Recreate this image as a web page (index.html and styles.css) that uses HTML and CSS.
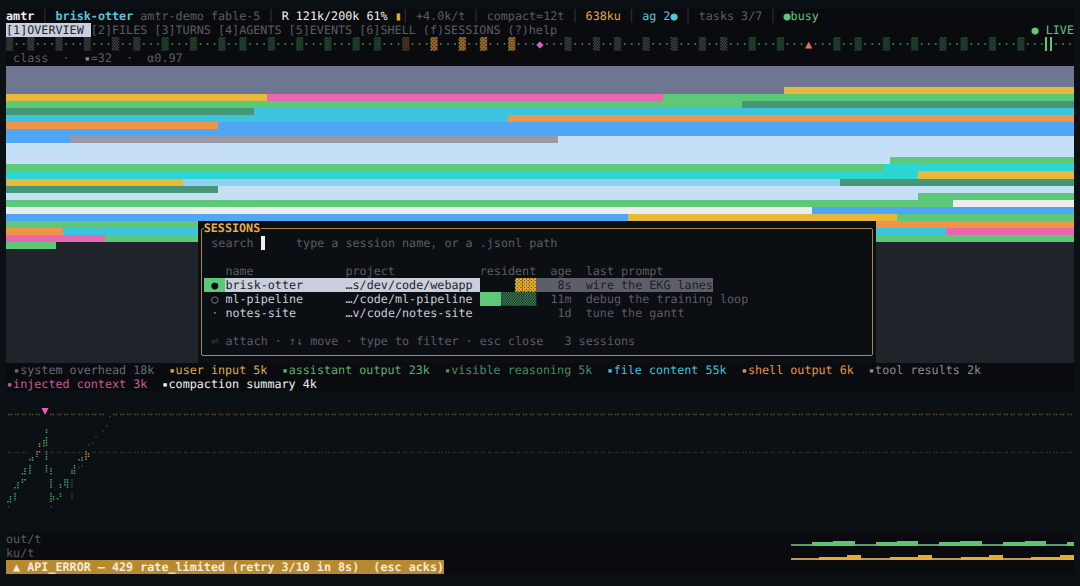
FILE: index.html
```html
<!DOCTYPE html>
<html lang="en">
<head>
<meta charset="utf-8">
<title>amtr</title>
<link rel="stylesheet" href="styles.css">
</head>
<body>
<main class="term">
  <header class="top">
    <div class="line"><b class="wh">amtr</b> <i class="sep">│</i> <b class="cy">brisk-otter</b> <span class="dim">amtr-demo fable-5</span> <i class="sep">│</i> <span class="wh">R 121k/200k 61%</span> <span class="am">▮</span><i class="sep">│</i> <span class="dim">+4.0k/t</span> <i class="sep">│</i> <span class="dim">compact≈12t</span> <i class="sep">│</i> <span class="or">638ku</span> <i class="sep">│</i> <span class="cy">ag 2●</span> <i class="sep">│</i> <span class="dim">tasks 3/7</span> <i class="sep">│</i> <span class="gr">●busy</span></div>
    <div class="line tabs"><span class="tabrow"><span class="tab-on">[1]OVERVIEW </span>[2]FILES [3]TURNS [4]AGENTS [5]EVENTS [6]SHELL (f)SESSIONS (?)help</span><span class="gr">● LIVE</span></div>
    <div class="line ticks"><i class="s0">▒</i><i>··</i><i class="s0">▒</i><i>···</i><i class="s0">▒</i><i>···</i><i class="s0">▒</i><i>···</i><i class="s0">▒</i><i>··</i><i class="s0">▒</i><i>···</i><i class="s1">▓</i><i>···</i><i class="s1">▓</i><i>···</i><i class="s1">▓</i><i>··</i><i class="s1">▓</i><i>···</i><i class="s1">▓</i><i>···</i><i class="s1">▓</i><i>···</i><i class="s1">▓</i><i>···</i><i class="s1">▓</i><i>··</i><i class="s1">▓</i><i>···</i><i class="s2">▓</i><i>···</i><i class="s3">▓</i><i>···</i><i class="s3">▓</i><i>··</i><i class="s3">▓</i><i>···</i><i class="s3">▓</i><i>···</i><i class="s4">◆</i><i>···</i><i class="s0">▒</i><i>···</i><i class="s0">▒</i><i>··</i><i class="s0">▒</i><i>···</i><i class="s0">▒</i><i>···</i><i class="s0">▒</i><i>···</i><i class="s0">▒</i><i>··</i><i class="s0">▒</i><i>···</i><i class="s1">▓</i><i>···</i><i class="s1">▓</i><i>···</i><i class="s5">▲</i><i>···</i><i class="s1">▓</i><i>··</i><i class="s1">▓</i><i>···</i><i class="s1">▓</i><i>···</i><i class="s1">▓</i><i>···</i><i class="s1">▓</i><i>··</i><i class="s1">▓</i><i>···</i><i class="s1">▓</i><i>···</i><i class="s1">▓</i><i>···</i><i class="s6"></i><i>···</i></div>
    <div class="line dim"> class  ·  <i class="mk mid">▪</i>=32  ·  α0.97</div>
  </header>

  <section class="chart">
    <div class="row"><span class="c-gray grow"></span></div>
    <div class="row"><span class="c-gray grow"></span></div>
    <div class="row"><span class="c-gray grow"></span></div>
    <div class="row"><span class="c-gray" style="width:778px"></span><span class="c-yel grow"></span></div>
    <div class="row"><span class="c-yel" style="width:261px"></span><span class="c-pink" style="width:396px"></span><span class="c-grn grow"></span></div>
    <div class="row"><span class="c-grn" style="width:736px"></span><span class="c-dk grow"></span></div>
    <div class="row"><span class="c-dk" style="width:248px"></span><span class="c-cy grow"></span></div>
    <div class="row"><span class="c-cy" style="width:502px"></span><span class="c-or grow"></span></div>
    <div class="row"><span class="c-or" style="width:212px"></span><span class="c-bl grow"></span></div>
    <div class="row"><span class="c-bl grow"></span></div>
    <div class="row"><span class="c-bl" style="width:64px"></span><span class="c-mut" style="width:488px"></span><span class="c-lt grow"></span></div>
    <div class="row"><span class="c-lt grow"></span></div>
    <div class="row"><span class="c-lt grow"></span></div>
    <div class="row"><span class="c-lt" style="width:884px"></span><span class="c-grn grow"></span></div>
    <div class="row"><span class="c-grn" style="width:877px"></span><span class="c-te grow"></span></div>
    <div class="row"><span class="c-te" style="width:912px"></span><span class="c-yel grow"></span></div>
    <div class="row"><span class="c-yel" style="width:177px"></span><span class="c-sky" style="width:657px"></span><span class="c-dk grow"></span></div>
    <div class="row"><span class="c-dk" style="width:212px"></span><span class="c-lt grow"></span></div>
    <div class="row"><span class="c-lt" style="width:912px"></span><span class="c-grn grow"></span></div>
    <div class="row"><span class="c-grn" style="width:947px"></span><span class="c-wh grow"></span></div>
    <div class="row"><span class="c-wh" style="width:806px"></span><span class="c-bl grow"></span></div>
    <div class="row"><span class="c-bl" style="width:622px"></span><span class="c-yel" style="width:269px"></span><span class="c-grn grow"></span></div>
    <div class="row"><span class="c-grn" style="width:870px"></span><span class="c-or grow"></span></div>
    <div class="row"><span class="c-or" style="width:57px"></span><span class="c-cy" style="width:883px"></span><span class="c-pink grow"></span></div>
    <div class="row"><span class="c-pink" style="width:99px"></span><span class="c-grn grow"></span></div>
    <div class="row"><span class="c-grn" style="width:50px"></span></div>

    <div class="modal">
      <div class="modal-box">
        <div class="modal-title">SESSIONS</div>
        <div class="line dim"> search <span class="cursor"> </span>    type a session name, or a .jsonl path</div>
        <div class="line"> </div>
        <div class="line dim">   name             project            resident  age  last prompt</div>
        <div class="line"><span class="sel-dot"> ● </span><span class="sel">brisk-otter      …s/dev/code/webapp </span>     <span class="amb">▓▓▓</span><span class="sel-rest">   8s  wire the EKG lanes</span></div>
        <div class="line lite"><span class="mid"> ○ </span>ml-pipeline      …/code/ml-pipeline <span class="solid">   </span><span class="gr-sh">▒▒▒▒▒</span>  <span class="dim">11m  debug the training loop</span></div>
        <div class="line lite"><span class="mid"> · </span>notes-site       …v/code/notes-site           <span class="dim"> 1d  tune the gantt</span></div>
        <div class="line"> </div>
        <div class="line dim"> ⏎ attach · ↑↓ move · type to filter · esc close   3 sessions</div>
      </div>
    </div>
  </section>

  <section class="legend">
    <div class="line"> <span class="l-sys"><i class="mk">▪</i>system overhead 18k</span>  <span class="l-usr"><i class="mk">▪</i>user input 5k</span>  <span class="l-ast"><i class="mk">▪</i>assistant output 23k</span>  <span class="l-vis"><i class="mk">▪</i>visible reasoning 5k</span>  <span class="l-fil"><i class="mk">▪</i>file content 55k</span>  <span class="l-she"><i class="mk">▪</i>shell output 6k</span>  <span class="l-too"><i class="mk">▪</i>tool results 2k</span></div>
    <div class="line"><span class="l-inj"><i class="mk">▪</i>injected context 3k</span>  <span class="wh"><i class="mk">▪</i>compaction summary 4k</span></div>
  </section>

  <section class="ekg">
    <svg class="ekg-svg" width="1068" height="141" viewBox="6 391 1068 141" aria-hidden="true">
      <path class="thr-a" d="M8 414.5H40M50 414.5H104M113 414.5H1074"/>
      <path class="thr-b" d="M8 452.5H30M50 452.5H84M92 452.5H1074"/>
      <path class="tri" d="M41.500 408H48.500L45 415Z"/>
      <path class="tr-g" d="M46.500 429V433M46.500 437V447M44 440V447M46.500 451V461M32.500 457V461M30 459V461M30 465V475M25 468V475M22.500 473V475M46.500 465V473M51 468V475M51 479V489M25 479V481M22.500 479V483M18 482V489M15 487V489M15 493V501M10.500 496V503M8 501V503M51 493V503M53.500 496V501M60.500 493V497M57.500 498V500M60.500 484V489M65 479V486M67.500 479V489M72 470V475M74.500 465V475M79 459V461M82 457V461"/>
      <path class="tr-o" d="M39.500 443V447M37 451V457M39.500 451V453M86 451V461M88.500 453V458"/>
      <path class="tr-d" d="M72 479V489M72 493V500M8.500 506V508M51 506V508M79 467V469M82 465V467M89 444V446M93 442V444M96 436V438M103 430V432M107 425V427M110 416V418"/>
    </svg>
  </section>

  <section class="foot">
    <div class="foot-top">
      <div class="dim"><div class="line">out/t</div><div class="line">ku/t</div></div>
      <svg class="spark" width="283" height="28" viewBox="791 532 283 28" aria-hidden="true">
        <path class="sp-gl" d="M791 544H812V546H791ZM855 544H876V546H855ZM918 544H939V546H918ZM982 544H1003V546H982ZM1046 544H1067V546H1046Z"/>
        <path class="sp-g" d="M812 542H833V546H812ZM833 541H855V546H833ZM876 542H897V546H876ZM897 541H918V546H897ZM939 542H960V546H939ZM960 541H982V546H960ZM1003 542H1025V546H1003ZM1025 541H1046V546H1025ZM1067 542H1074V546H1067Z"/>
        <path class="sp-ol" d="M791 558H819V560H791ZM861 558H890V560H861ZM932 558H961V560H932ZM1003 558H1031V560H1003Z"/>
        <path class="sp-o" d="M819 557H847V560H819ZM847 555H861V560H847ZM890 557H918V560H890ZM918 555H932V560H918ZM961 557H989V560H961ZM989 555H1003V560H989ZM1031 557H1060V560H1031ZM1060 555H1074V560H1060Z"/>
      </svg>
    </div>
    <div class="line"><span class="alert"> ▲ API_ERROR — 429 rate_limited (retry 3/10 in 8s)  (esc acks)</span></div>
  </section>
</main>
</body>
</html>
```
FILE: styles.css
```css
html, body { margin: 0; height: 100%; }
body {
  background: #0b1014;
  color: #c8ccd4;
  font-family: "DejaVu Sans Mono", "Liberation Mono", monospace;
  font-size: 11.74px;
  line-height: 14.13px;
  text-rendering: geometricPrecision;
  overflow: hidden;
}
.term { padding: 9px 6px 0; display: flex; flex-direction: column; }
.line { height: 14.13px; white-space: pre; }
i { font-style: normal; }
b { font-weight: 700; }
.wh { color: #f0f0f0; }
.cy { color: #58c4dc; }
.dim { color: #5a5d64; }
.mid { color: #8a8d96; }
.am { color: #e6ad2e; }
.or { color: #e5a54a; }
.gr { color: #5dc878; }
.sep { color: #34373d; }
.mk {
  display: inline-block;
  width: 7.07px;
  font-size: 8.5px;
  line-height: 1;
  text-align: center;
  vertical-align: 1px;
}
.top { background: #0a0b0e; }
.tabs { display: flex; justify-content: space-between; color: #5a5d64; }
.tab-on { background: #c9cfdc; color: #23252b; }
.ticks { color: #3f8a5c; }
.s0 { color: #4a4e4e; }
.s1 { color: #20402e; }
.s2 { color: #4a3420; }
.s3 { color: #94682a; }
.s4 { color: #e060c0; }
.s5 { color: #e07060; }
.s6 {
  display: inline-block;
  box-sizing: border-box;
  width: 7.07px;
  height: 14px;
  margin: 0;
  vertical-align: top;
  border-left: 2px solid #5dc878;
  border-right: 2px solid #5dc878;
}
.chart {
  position: relative;
  height: 297.2px;
  background: #1f232a;
}
.row { display: flex; height: 7.07px; }
.row span { display: block; height: 100%; }
.grow { flex: 1; }
.c-gray { background: #6f7790; }
.c-yel { background: #e6b83c; }
.c-pink { background: #e868b0; }
.c-grn { background: #5dc878; }
.c-dk { background: #469678; }
.c-cy { background: #3cc4dc; }
.c-or { background: #ef9448; }
.c-bl { background: #4fa6f5; }
.c-mut { background: #9a9aa6; }
.c-lt { background: #c5dff6; }
.c-te { background: #2dd6d0; }
.c-sky { background: #93cfee; }
.c-wh { background: #ececec; }
.modal {
  position: absolute;
  left: 191.700px;
  top: 155.5px;
  width: 678px;
  height: 141.7px;
  box-sizing: border-box;
  padding: 7px 3px 6px 3px;
  background: #0b0e12;
}
.modal-box {
  position: relative;
  box-sizing: border-box;
  height: 128px;
  border: 1px solid #ab8844;
  border-radius: 2px;
  padding: 6.6px 0 0 2.5px;
}
.modal-title {
  position: absolute;
  left: 2px;
  top: -8px;
  padding: 0 1px 0 0;
  line-height: 14.13px;
  background: #0b0e12;
  color: #e5b04f;
  font-weight: 700;
}
.cursor { background: #f0f0f0; display: inline-block; width: 4px; margin-right: 3.07px; }
.sel-dot { background: #5dc878; color: #0b0e12; }
.sel { background: #c9cfdc; color: #23252b; }
.amb { color: #e6ad2e; }
.sel-rest { background: #5c5e69; color: #1f2026; }
.lite { color: #c8ccd4; }
.solid { background: #5dc878; }
.gr-sh { color: #4a9a62; }
.legend { background: #0a0b0e; }
.l-sys { color: #666a74; }
.l-usr { color: #d8ac4a; }
.l-ast { color: #58b070; }
.l-vis { color: #458a68; }
.l-fil { color: #3cc4dc; }
.l-she { color: #e59448; }
.l-too { color: #8c8c96; }
.l-inj { color: #c85a9a; }
.ekg { height: 140.8px; }
.ekg-svg { display: block; }
.thr-a, .thr-b { fill: none; stroke-width: 1.4; stroke-dasharray: 1.5 1 1.5 3.07; }
.thr-a { stroke: #664a30; }
.thr-b { stroke: #2e3135; }
.tri { fill: #e060c0; }
.tr-g, .tr-o, .tr-d { fill: none; stroke-width: 1.5; stroke-dasharray: 1.6 .9; }
.tr-g { stroke: #4a9a68; }
.tr-o { stroke: #b0824a; }
.tr-d { stroke: #3a3f4c; }
.foot { background: #0a0b0e; }
.foot-top { display: flex; justify-content: space-between; height: 28.26px; }
.spark { display: block; }
.sp-g { fill: #5dc474; }
.sp-gl { fill: #5c9a6c; }
.sp-o { fill: #e6ad2e; }
.sp-ol { fill: #c09a60; }
.alert { background: #b88a2f; color: #f4ecdc; font-weight: 700; }
```
